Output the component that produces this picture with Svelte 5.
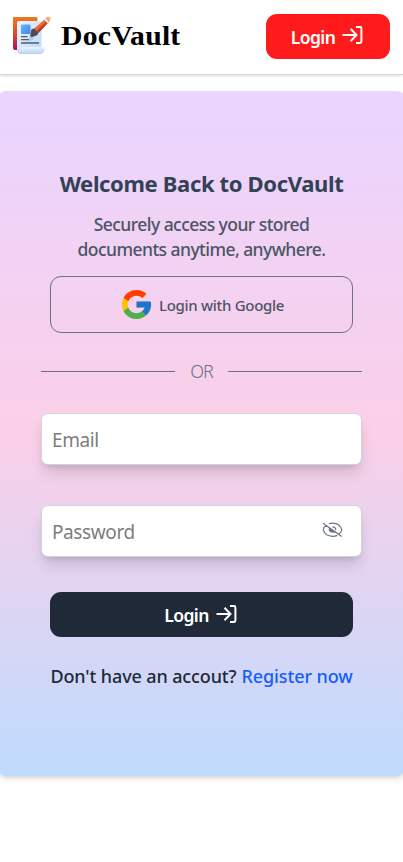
<script>
  let email = $state('');
  let password = $state('');
  let visible = $state(false);
</script>

{#snippet loginIcon()}
  <svg class="login-icon" width="24" height="24" viewBox="0 0 24 24" fill="none" stroke="currentColor" stroke-width="2">
    <path d="M1.5 12H15M9.5 5.8 15.5 12l-6 6.2" />
    <path d="M15 4h4q1.4 0 1.4 1.4v13.2q0 1.4-1.4 1.4h-4" />
  </svg>
{/snippet}

<div class="page">
  <header>
    <a class="brand" href="#home">
      <svg width="40" height="40" viewBox="0 0 40 40">
        <defs>
          <linearGradient id="cover" x1="0" y1="0" x2="0" y2="1"><stop stop-color="#f07820" /><stop offset=".55" stop-color="#d9482e" /><stop offset="1" stop-color="#a01555" /></linearGradient>
          <linearGradient id="paper" x1="0" y1="0" x2="1" y2="1"><stop stop-color="#eef5ff" /><stop offset="1" stop-color="#bdd7f8" /></linearGradient>
          <linearGradient id="roll" x1="0" y1="0" x2="0" y2="1"><stop stop-color="#edf5ff" /><stop offset="1" stop-color="#b3d1f5" /></linearGradient>
          <linearGradient id="photo" x1="0" y1="0" x2="1" y2="1"><stop stop-color="#66b5ff" /><stop offset="1" stop-color="#4285ed" /></linearGradient>
        </defs>
        <path d="M2 1h22q1.5 0 1.5 1v10L8 34H3q-2 0-2-2V2q0-1 1-1z" fill="url(#cover)" />
        <path d="M7 5h21q1.5 0 1.5 2v28H5V7q0-2 2-2z" fill="url(#paper)" />
        <path d="M9 31h23q2 0 1.2 1.2-1.2 5.8-5.2 5.8H9q-4 0-4-4 4 .5 4-3z" fill="url(#roll)" />
        <rect x="9" y="8.5" width="9.5" height="9.5" rx="1" fill="url(#photo)" />
        <path d="M9 20.7h6.5M9 23.7h9M9 27h18" stroke="#535b68" stroke-width="1.3" />
        <path d="M18.5 18l3.5 5-6 3z" fill="#a6c9f6" />
        <path d="M18.3 19.5l1-6 3-1.2 4.3 4-1.5 3-5.6 2z" fill="#4c4c56" />
        <path d="M22.5 12.3 34 2.2q2-1.7 3.4-.2t-.1 3.4L26.8 16.7z" fill="#e96b2e" />
        <path d="M24.7 14.5 36 4.2l1 1.2-10.2 11.3z" fill="#bd3c31" />
        <path d="M32.1 3.8 34 2.2l3.2 3.3-1.7 1.7z" fill="#f5e2ef" />
        <circle cx="36.9" cy="2.6" r="1.8" fill="#efb85d" />
      </svg>
      <span>DocVault</span>
    </a>
    <button class="header-login"><span>Login</span>{@render loginIcon()}</button>
  </header>

  <main>
    <h1>Welcome Back to DocVault</h1>
    <p class="intro"><span>Securely access your stored</span><br /><span>documents anytime, anywhere.</span></p>
    <button class="google">
      <svg width="35" height="35" viewBox="0 0 48 48">
        <path fill="#FFC107" d="M43.611 20.083H42V20H24v8h11.303C33.654 32.657 29.223 36 24 36c-6.627 0-12-5.373-12-12s5.373-12 12-12c3.059 0 5.842 1.154 7.961 3.039l5.657-5.657C34.046 6.053 29.268 4 24 4 12.955 4 4 12.955 4 24s8.955 20 20 20 20-8.955 20-20c0-1.341-.138-2.65-.389-3.917z" />
        <path fill="#FF3D00" d="m6.306 14.691 6.571 4.819C14.655 15.108 18.961 12 24 12c3.059 0 5.842 1.154 7.961 3.039l5.657-5.657C34.046 6.053 29.268 4 24 4 16.318 4 9.656 8.337 6.306 14.691z" />
        <path fill="#4CAF50" d="M24 44c5.166 0 9.86-1.977 13.409-5.192l-6.19-5.238A11.91 11.91 0 0 1 24 36c-5.202 0-9.619-3.317-11.283-7.946l-6.522 5.025C9.505 39.556 16.227 44 24 44z" />
        <path fill="#1976D2" d="M43.611 20.083H42V20H24v8h11.303a12.04 12.04 0 0 1-4.087 5.571l6.193 5.238C36.971 39.205 44 34 44 24c0-1.341-.138-2.65-.389-3.917z" />
      </svg>
      <span>Login with Google</span>
    </button>
    <div class="divider"><i></i><span>OR</span><i></i></div>
    <div class="field email"><input aria-label="Email" placeholder="Email" type="email" bind:value={email} /></div>
    <div class="field password">
      <input aria-label="Password" placeholder="Password" type={visible ? 'text' : 'password'} bind:value={password} />
      <button class="eye" aria-label="Toggle password visibility" onclick={() => (visible = !visible)}>
        <svg width="22" height="20" viewBox="0 0 22 20" fill="none" stroke="currentColor" stroke-width="1.2">
          <path d="M4.1 5.3Q1.5 7.2 1.2 9.7q1.9 6.6 9.4 6.6 2.7 0 4.7-.9M6.8 3.8q1.7-.7 3.8-.7 7 0 9.3 6.6-.6 2.5-2.9 4.2M1.1 3.2l18.6 13.3" />
          <path d="M7 7.4q-1.2 4.6 3.2 5.2 2.4.2 3.6-.5z" fill="currentColor" stroke="none" />
          <path d="M10.4 6.8q3.5.2 3.3 3.4" />
        </svg>
      </button>
    </div>
    <button class="submit"><span>Login</span>{@render loginIcon()}</button>
    <p class="register"><span>Don't have an accout?</span><a href="#register">Register now</a></p>
  </main>
</div>

<style>
  :global(body) { margin: 0; background: #fff; }
  .page { min-height: 100vh; overflow: hidden; background: #fff; font-family: "Noto Sans", "Open Sans", sans-serif; }
  .page, .page * { box-sizing: border-box; }
  button { font: inherit; border: 0; padding: 0; cursor: pointer; }
  a { text-decoration: none; }
  header { height: 75px; display: flex; align-items: center; justify-content: space-between; padding: 0 13px 2px 12px; border-bottom: 1px solid #d1d5db; box-shadow: 0 1px 3px #0002; }
  .brand { display: flex; align-items: center; gap: 9px; color: #000; font: 700 27px/36px "Liberation Serif", serif; }
  .brand span { letter-spacing: .2px; transform: scaleX(1.1); transform-origin: left; }
  .brand svg { display: block; }
  .header-login, .submit { display: flex; align-items: center; justify-content: center; height: 45px; border-radius: 11px; color: #fff; font-size: 17.5px; font-weight: 600; }
  .header-login { width: 124px; background: #ff1b1b; }
  .header-login span, .submit span { letter-spacing: -.6px; padding-top: 1px; }
  .login-icon { display: block; margin: -2px 0 0 6px; }
  main { margin: 16px -2px 0; height: 685px; padding: 76px 43px 0; border-radius: 8px; display: flex; flex-direction: column; align-items: center; background: linear-gradient(to bottom, #e9d5ff, #fbcfe8 50%, #bfdbfe); box-shadow: 0 4px 6px -1px #0000001c, 0 2px 4px -2px #0000001c; }
  h1 { margin: 0; font-size: 22px; font-weight: 700; line-height: 32px; color: #334155; letter-spacing: -.35px; white-space: nowrap; }
  .intro { margin: 13px 0 0; font-size: 17.5px; font-weight: 500; line-height: 25px; color: #4b5563; text-align: center; letter-spacing: -.55px; white-space: nowrap; }
  .google { margin-top: 14px; flex-shrink: 0; width: 303px; height: 57px; border: 1px solid #6b7280; border-radius: 11px; background: transparent; display: flex; align-items: center; justify-content: center; gap: 5px; color: #4b5563; font-size: 15px; font-weight: 500; }
  .google span { letter-spacing: -.3px; padding-top: 1px; }
  .divider { width: 321px; height: 28px; margin-top: 24px; display: flex; align-items: center; justify-content: space-between; color: #6b7280; font-size: 18px; font-weight: 350; }
  .divider i { width: 134px; height: 1px; background: #6b7280; }
  .divider span { letter-spacing: -1px; }
  .field { width: 321px; height: 52px; flex-shrink: 0; display: flex; align-items: center; background: #fff; border: 1px solid #d1d5db; border-radius: 7px; box-shadow: 0 10px 15px -3px #00000026, 0 4px 6px -4px #00000026; }
  .email { margin-top: 28px; }
  .password { margin-top: 40px; }
  input { flex: 1; min-width: 0; height: 48px; padding: 1px 0 0 10px; border: 0; outline: 0; background: transparent; font: 400 19px "Noto Sans", sans-serif; letter-spacing: -.4px; }
  input::placeholder { color: #7d7d7d; opacity: 1; }
  .eye { display: block; margin: -3px 17px 0 0; height: 20px; color: #6b7280; background: transparent; }
  .eye svg { display: block; }
  .submit { margin-top: 35px; flex-shrink: 0; width: 303px; background: #1f2937; }
  .register { display: flex; gap: 5px; margin: 25px 0 0; font-size: 18px; font-weight: 500; line-height: 28px; color: #1f2937; white-space: nowrap; letter-spacing: -.12px; }
  .register a { color: #155dfc; }
</style>
